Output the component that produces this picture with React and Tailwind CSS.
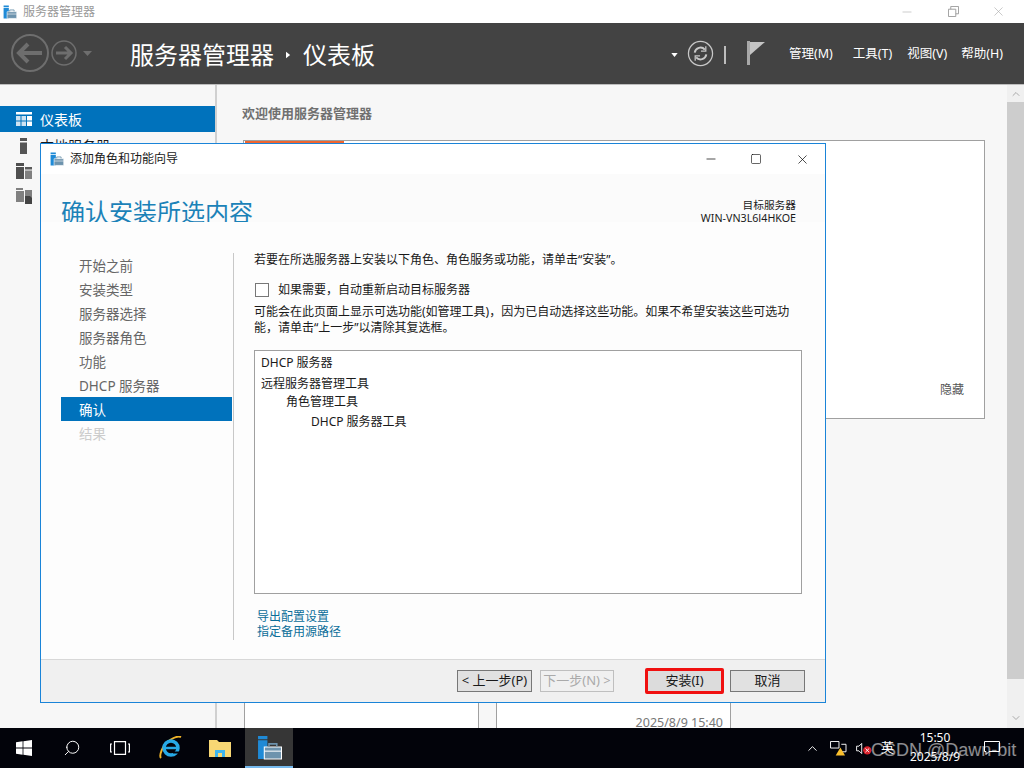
import React from 'react';
import { ChevronUp, ChevronDown, Search, X, Minus, Square } from 'lucide-react';

const font = { fontFamily: '"Noto Sans", "Noto Sans CJK SC", sans-serif' };

const steps = ['开始之前', '安装类型', '服务器选择', '服务器角色', '功能', 'DHCP 服务器'];

const AppIcon = ({ className }) => (
  <svg viewBox="0 0 24 24" className={className}>
    <path d="M1 1h9v3H1zM1 5h9v18H1z" fill="#1f8ad6" />
    <path d="M7 11.500h16.500V23H7z" fill="#6d93ad" stroke="#fff" strokeWidth="1" />
    <path d="M11.500 11V8.500h7.500V11" fill="none" stroke="#6d93ad" strokeWidth="1.500" />
    <path d="M7 15.500h16.500" stroke="#fff" strokeWidth="1" />
  </svg>
);

const WinButton = ({ children, className = '' }) => (
  <div className={`h-[22px] flex items-center justify-center text-[13px] ${className}`}>{children}</div>
);

export default function App() {
  return (
    <div style={font} className="relative w-[1024px] h-[768px] overflow-hidden flex flex-col bg-white text-[13px] text-[#1a1a1a]">
      {/* title bar */}
      <div className="h-[23px] flex items-center bg-white shrink-0">
        <AppIcon className="w-[14px] h-[14px] ml-[3px]" />
        <span className="ml-[6px] text-[12px] text-[#999]">服务器管理器</span>
        <div className="ml-auto flex items-center text-[#aaa]">
          <Minus size={14} strokeWidth={1} className="mr-[34px]" />
          <svg viewBox="0 0 12 12" className="w-[11px] h-[11px] mr-[32px]" fill="none" stroke="#999">
            <path d="M.5 3.500h8v8h-8zM3 3.500v-3h8.500v8h-3" />
          </svg>
          <X size={15} strokeWidth={1} className="mr-[18px]" />
        </div>
      </div>

      {/* header */}
      <div className="h-[62px] bg-[#434343] border-b border-[#bdbdbd] pt-[2px] flex items-center shrink-0 text-white">
        <svg viewBox="0 0 84 40" className="w-[84px] h-[40px] ml-[10px] -mt-[2px]" fill="none" stroke="#6e6e6e">
          <circle cx="20" cy="19" r="18" strokeWidth="2" />
          <path d="M32 19H9M18 10l-9 9 9 9" strokeWidth="4" />
          <circle cx="54" cy="19" r="12" strokeWidth="1.500" />
          <path d="M46 19h15M55 13l6 6-6 6" strokeWidth="3" />
          <path d="M73 17h9l-4.500 5z" fill="#6e6e6e" stroke="none" />
        </svg>
        <span className="ml-[36px] text-[24px] leading-none">服务器管理器</span>
        <svg viewBox="0 0 6 8" className="w-[5px] h-[8px] ml-[12px]"><path d="M0 0l5 4-5 4z" fill="#fff" /></svg>
        <span className="ml-[12px] text-[24px] leading-none">仪表板</span>
        <div className="ml-auto flex items-center">
          <svg viewBox="0 0 8 5" className="w-[7px] h-[4px]"><path d="M0 0h8L4 5z" fill="#fff" /></svg>
          <svg viewBox="0 0 28 28" className="w-[27px] h-[27px] ml-[9px] -mt-[2px]" fill="none" stroke="#c8c8c8">
            <circle cx="14" cy="14" r="12.500" strokeWidth="1.300" />
            <path d="M8 13a6 6 0 0 1 10.500-3M20 15a6 6 0 0 1-10.500 3" strokeWidth="2" />
            <path d="M19.500 6.500v5h-5M8.500 21.500v-5h5" strokeWidth="1.300" />
          </svg>
          <div className="w-[2px] h-[18px] bg-[#bdbdbd] ml-[10px]" />
          <svg viewBox="0 0 18 24" className="w-[18px] h-[24px] ml-[21px] -mt-[4px]">
            <path d="M0 0h3v24H0z" fill="#a8a8a8" />
            <path d="M3 1h15L3 14z" fill="#c4c4c4" />
          </svg>
          <span className="ml-[24px] text-[12.500px]">管理(M)</span>
          <span className="ml-[20px] text-[12.500px]">工具(T)</span>
          <span className="ml-[15px] text-[12.500px]">视图(V)</span>
          <span className="ml-[14px] mr-[21px] text-[12.500px]">帮助(H)</span>
        </div>
      </div>

      {/* dashboard behind the wizard */}
      <div className="flex-1 min-h-0 flex bg-[#f7f7f7]">
        <div className="w-[217px] shrink-0 border-r-2 border-[#d0d0d0] pt-[21px]">
          <div className="h-[26px] bg-[#0072bc] text-white flex items-center pl-[16px]">
            <svg viewBox="0 0 16 14" className="w-[16px] h-[14px]">
              <path d="M0 0h16v2.500H0z" fill="#fff" />
              <path d="M0 4h4.500v4.500H0zM5.500 4h4.500v4.500H5.500zM0 9.500h4.500V14H0zM5.500 9.500h4.500V14H5.500z" fill="#cfe3f2" />
              <path d="M11 4h5v4.500h-5zM11 9.500h5V14h-5z" fill="#fff" />
            </svg>
            <span className="ml-[8px] text-[14px]">仪表板</span>
          </div>
          <div className="flex flex-col gap-[9px] pl-[16px] pt-[5px]">
            <div className="h-[17px] flex items-center">
              <svg viewBox="0 0 7 16" className="ml-[4px] w-[7px] h-[16px]">
                <path d="M0 0h7v3H0zM0 4.500h7V16H0z" fill="#555" />
              </svg>
              <span className="ml-[13px] text-[14px]">本地服务器</span>
            </div>
            <svg viewBox="0 0 16 16" className="w-[16px] h-[16px]">
              <path d="M0 0h8v3H0zM0 4h8v12H0z" fill="#4f4f4f" />
              <path d="M9 4h7v2.500H9z" fill="#5a5a5a" />
              <path d="M9 7.500h7V16H9z" fill="#808080" />
            </svg>
            <svg viewBox="0 0 16 16" className="w-[16px] h-[16px]">
              <path d="M0 0h7v2H0zM0 3h8v11H0zM9 2h7v13H9z" fill="#808080" />
              <path d="M9 8h5l2 2v6H9z" fill="#444" />
            </svg>
          </div>
        </div>

        <div className="flex-1 min-w-0 pl-[26px] pt-[19px]">
          <div className="-ml-[1px] font-bold text-[#707070] leading-[18px]">欢迎使用服务器管理器</div>
          <div className="mt-[18px] w-[742px] h-[279px] bg-white border border-[#a0a0a0] flex flex-col">
            <div className="w-[99px] h-[4px] bg-[#f0652f] ml-[1px]" />
            <div className="mt-auto mb-[19px] mr-[20px] text-right text-[#555] text-[12px]">隐藏</div>
          </div>
          <div className="mt-[221px] ml-[1px] flex h-[90px]">
            <div className="w-[235px] bg-white border-x border-[#a0a0a0]" />
            <div className="w-[235px] ml-[17px] bg-white border-x border-[#a0a0a0] text-right pr-[7px] pt-[75px] text-[12.500px] leading-[16px] text-[#777]">2025/8/9 15:40</div>
          </div>
        </div>

        <div className="w-[17px] shrink-0 flex flex-col bg-[#f0f0f0]">
          <div className="h-[17px] flex items-center justify-center"><ChevronUp size={12} color="#aaa" /></div>
          <div className="h-[577px] bg-[#cdcdcd]" />
          <div className="mt-auto mb-[2px] h-[17px] flex items-center justify-center"><ChevronDown size={12} color="#aaa" /></div>
        </div>
      </div>

      {/* taskbar */}
      <div className="h-[40px] bg-[#02030a] flex items-center shrink-0 text-white relative">
        <svg viewBox="0 0 16 16" className="w-[16px] h-[16px] ml-[16px]" fill="#fff">
          <path d="M0 2.200L6.600 1.300V7.600H0zM7.400 1.200L16 0V7.600H7.400zM0 8.400H6.600V14.700L0 13.800zM7.400 8.400H16V16L7.400 14.800z" />
        </svg>
        <Search size={18} strokeWidth={1.300} className="ml-[31px] -scale-x-100" />
        <svg viewBox="0 0 20 14" className="w-[20px] h-[14px] ml-[29px]" fill="none" stroke="#fff" strokeWidth="1.200">
          <path d="M4.500.600h11v12.800h-11zM2 3H.600v8H2M18 3h1.400v8H18" />
        </svg>
        <svg viewBox="0 0 24 24" className="w-[24px] h-[24px] ml-[28px]">
          <path d="M3 22C1 20 4 9 12 4c5-3 9-4 11-3" fill="none" stroke="#f0b429" strokeWidth="2" />
          <circle cx="13" cy="12" r="7" fill="none" stroke="#27a9e6" strokeWidth="3.500" />
          <path d="M7 12h13" stroke="#27a9e6" strokeWidth="2.500" />
          <path d="M15 15.500h7v2h-7z" fill="#02030a" />
        </svg>
        <svg viewBox="0 0 22 18" className="w-[22px] h-[18px] ml-[27px]">
          <path d="M0 1h8l2 2h12v15H0z" fill="#f7d774" />
          <path d="M6 11h10v7h-3v-4H9v4H6z" fill="#3db4ee" />
        </svg>
        <div className="ml-[14px] w-[48px] h-[40px] bg-[#363636] border-b-[2px] border-[#76b9ed] flex items-center justify-center">
          <AppIcon className="w-[25px] h-[25px]" />
        </div>
        <div className="ml-auto flex items-center h-full">
          <ChevronUp size={15} strokeWidth={1.500} />
          <svg viewBox="0 0 18 16" className="w-[17px] h-[15px] ml-[10px]">
            <path d="M.500.500h9v7h-9zM12 3.500h5v8h-5" fill="none" stroke="#fff" />
            <path d="M11 7l5 8.500H6z" fill="#fbc02d" />
          </svg>
          <svg viewBox="0 0 18 14" className="w-[17px] h-[13px] ml-[9px]">
            <path d="M.500 4.500h2.500l3-3v11l-3-3H.500z" fill="none" stroke="#fff" />
            <circle cx="12" cy="9" r="4.500" fill="#d9202a" />
            <path d="M10 7l4 4M14 7l-4 4" stroke="#fff" />
          </svg>
          <span className="ml-[8px] text-[13px]">英</span>
          <div className="ml-[13px] w-[56px] -mt-[2px] flex flex-col items-center text-[12px] leading-[19px]">
            <span>15:50</span>
            <span>2025/8/9</span>
          </div>
          <svg viewBox="0 0 16 14" className="w-[16px] h-[14px] ml-[21px] mr-[24px]" fill="none" stroke="#fff">
            <path d="M.500.500h15v10H5l-3 3v-3H.500z" />
          </svg>
        </div>
        {/* watermark */}
        <span className="absolute left-[871px] top-[12px] text-[18px] leading-[20px] text-white/55 whitespace-nowrap" style={{ fontFamily: '"Liberation Sans", sans-serif' }}>CSDN @Dawn-bit</span>
      </div>

      {/* wizard window */}
      <div className="absolute left-[40px] top-[143px] w-[786px] h-[560px] bg-white border border-[#1a84d8] flex flex-col">
        <div className="h-[30px] shrink-0 flex items-center">
          <AppIcon className="w-[14px] h-[14px] ml-[9px]" />
          <span className="ml-[6px] text-[12px]">添加角色和功能向导</span>
          <div className="ml-auto flex items-center text-black">
            <Minus size={14} strokeWidth={1.200} className="mr-[32px]" />
            <Square size={12} strokeWidth={1.200} className="mr-[33px]" />
            <X size={15} strokeWidth={1.100} className="mr-[15px]" />
          </div>
        </div>
        <div className="h-[48px] shrink-0 bg-[#fbfbfb] flex items-center justify-between pt-[28px] pl-[20px] pr-[29px]">
          <span className="text-[24px] leading-none text-[#1b82b8]">确认安装所选内容</span>
          <div className="text-right text-[10.700px] leading-[13px]">
            <div>目标服务器</div>
            <div>WIN-VN3L6J4HKQE</div>
          </div>
        </div>
        <div className="flex-1 min-h-0 flex pt-[31px] pl-[20px] pr-[23px] bg-[#fdfdfd]">
          <div className="w-[171px] shrink-0 flex flex-col text-[#666] text-[13.500px]">
            {steps.map((s) => (
              <div key={s} className="h-[24px] flex items-center pl-[18px] pt-[2px]">{s}</div>
            ))}
            <div className="h-[24px] flex items-center pl-[18px] pt-[2px] bg-[#0072bc] text-white">确认</div>
            <div className="h-[24px] flex items-center pl-[18px] pt-[2px] text-[#ccc]">结果</div>
          </div>
          <div className="w-[1px] h-[387px] bg-[#c8c8c8] ml-[1px]" />
          <div className="flex-1 min-w-0 pl-[20px] flex flex-col text-[12px]">
            <div className="h-[14px] leading-[14px]">若要在所选服务器上安装以下角色、角色服务或功能，请单击“安装”。</div>
            <div className="mt-[15px] flex items-center h-[15px]">
              <div className="w-[14px] h-[14px] border border-[#777] bg-white ml-[1px]" />
              <span className="ml-[9px]">如果需要，自动重新启动目标服务器</span>
            </div>
            <div className="mt-[7px] leading-[16px] whitespace-nowrap">
              可能会在此页面上显示可选功能(如管理工具)，因为已自动选择这些功能。如果不希望安装这些可选功
              <br />
              能，请单击“上一步”以清除其复选框。
            </div>
            <div className="mt-[14px] h-[244px] border border-[#a0a0a0] bg-white pl-[6px] pt-[3px] leading-[18px] w-[548px]">
              <div>DHCP 服务器</div>
              <div className="mt-[3px]">远程服务器管理工具</div>
              <div className="pl-[25px]">角色管理工具</div>
              <div className="pl-[50px] mt-[2px]">DHCP 服务器工具</div>
            </div>
            <div className="mt-[15px] ml-[3px] leading-[15px] text-[#0b6e99]">
              <div>导出配置设置</div>
              <div>指定备用源路径</div>
            </div>
          </div>
        </div>
        <div className="h-[43px] shrink-0 bg-[#f0f0f0] border-t border-[#d8d8d8] flex items-center pl-[416px]">
          <WinButton className="w-[75px] bg-[#e1e1e1] border border-[#777]">&lt; 上一步(P)</WinButton>
          <WinButton className="w-[74px] ml-[8px] border border-[#bfbfbf] text-[#aaa]">下一步(N) &gt;</WinButton>
          <WinButton className="w-[79px] ml-[31px] !h-[26px] bg-[#dcdcdc] border-[3px] border-[#f01010] rounded-[2px]">安装(I)</WinButton>
          <WinButton className="w-[75px] ml-[6px] bg-[#e1e1e1] border border-[#777]">取消</WinButton>
        </div>
      </div>
    </div>
  );
}
